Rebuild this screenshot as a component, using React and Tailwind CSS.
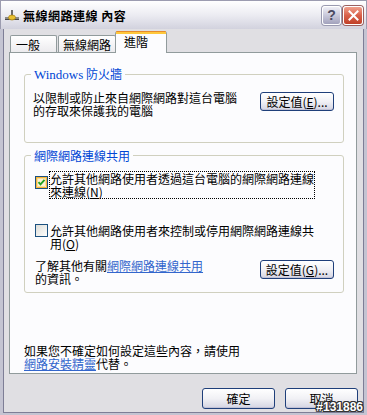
import React from "react";

const FONT = "font-['Noto_Sans_CJK_TC','Noto_Sans',sans-serif]";

function XpButton({ children, className = "" }) {
  return (
    <div
      className={`flex items-center justify-center whitespace-nowrap rounded-[3px] border border-[#1f3f7a] bg-gradient-to-b from-[#ffffff] via-[#f1f1f5] to-[#d4d4e2] shadow-[inset_0_-1px_0_#c2c2d6,inset_0_1px_0_#ffffff] text-[12px] leading-[13px] text-black ${className}`}
    >
      {children}
    </div>
  );
}

function CheckBox({ checked }) {
  return (
    <svg width="13" height="13" viewBox="0 0 13 13" className="shrink-0">
      <defs>
        <linearGradient id={checked ? "cbg1" : "cbg2"} x1="0" y1="0" x2="1" y2="1">
          <stop offset="0" stopColor="#dcdcd7" />
          <stop offset="1" stopColor="#ffffff" />
        </linearGradient>
      </defs>
      <rect x="0.5" y="0.5" width="12" height="12" fill={`url(#${checked ? "cbg1" : "cbg2"})`} stroke="#1c5180" />
      {checked && (
        <>
          <rect x="1.5" y="1.5" width="10" height="10" fill="none" stroke="#f8b636" />
          <rect x="2.5" y="2.5" width="8" height="8" fill="#fdf3d6" stroke="#fcd373" strokeWidth="0.6" />
          <path d="M3.5 6.2 L5.5 8.4 L9.5 3.8" fill="none" stroke="#21a121" strokeWidth="1.8" />
        </>
      )}
    </svg>
  );
}

function AppIcon() {
  return (
    <svg width="14" height="12" viewBox="0 0 14 12">
      <rect x="6" y="0" width="2" height="7" fill="#6b6b6b" />
      <rect x="0" y="7" width="14" height="2" fill="#8a8a8a" />
      <rect x="0" y="9" width="14" height="1" fill="#4a4a4a" />
      <ellipse cx="7" cy="7.5" rx="3.5" ry="2.5" fill="#e8c030" stroke="#a07a10" strokeWidth="0.7" />
    </svg>
  );
}

export default function App() {
  return (
    <div className={`relative w-[367px] h-[415px] overflow-hidden bg-[#c4c4d2] flex flex-col ${FONT}`}>
      {/* Title bar */}
      <div className="h-[29px] shrink-0 flex items-center bg-gradient-to-b from-[#ffffff] via-[#ececf2] to-[#d2d2de] border-t border-x border-[#9c9cb0]">
        <div className="ml-[4px] mt-[1px] flex items-center">
          <AppIcon />
        </div>
        <div className="ml-[4px] text-[12px] font-bold tracking-[0.5px] text-black leading-[13px] whitespace-nowrap">
          無線網路連線 內容
        </div>
        <div className="ml-auto mr-[3px] flex items-center">
          <div className="w-[19px] h-[19px] rounded-[3px] border border-white bg-gradient-to-b from-[#eeeef6] via-[#c8c8da] to-[#a2a2bc] flex items-center justify-center shadow-[0_0_0_1px_#9a9ab0]">
            <span className="text-[14px] font-bold leading-none text-[#4a4a60] font-['Liberation_Sans',sans-serif]">?</span>
          </div>
          <div className="ml-[2px] w-[20px] h-[19px] rounded-[3px] border border-white bg-gradient-to-b from-[#f0a08c] via-[#d8604a] to-[#c04028] flex items-center justify-center shadow-[0_0_0_1px_#9a6060]">
            <svg width="11" height="11" viewBox="0 0 11 11">
              <path d="M1.5 1.5 L9.5 9.5 M9.5 1.5 L1.5 9.5" stroke="#ffffff" strokeWidth="2" strokeLinecap="square" />
            </svg>
          </div>
        </div>
      </div>

      {/* Body */}
      <div className="flex-1 mx-[3px] mb-[2px] border-x border-b border-[#7e7e96] bg-[#e0dfe3] flex flex-col">
        {/* Tabs */}
        <div className="h-[23px] flex items-end pl-[6px] relative z-10">
          <div className="w-[47px] h-[17px] border-t border-x border-[#919b9c] rounded-t-[2px] bg-gradient-to-b from-[#ffffff] to-[#ecebee] text-[12px] leading-[13px] pl-[5px] pt-[2px] text-black whitespace-nowrap">
            一般
          </div>
          <div className="ml-[1px] w-[58px] h-[17px] border-t border-x border-[#919b9c] rounded-t-[2px] bg-gradient-to-b from-[#ffffff] to-[#ecebee] text-[12px] leading-[13px] pl-[4px] pt-[2px] text-black whitespace-nowrap">
            無線網路
          </div>
          <div className="-ml-[1px] -mb-px w-[52px] h-[22px] border-x border-[#919b9c] rounded-t-[3px] bg-[#fcfcfe] flex flex-col">
            <div className="h-[1px] bg-[#e68b2c] rounded-t-[3px]" />
            <div className="h-[2px] bg-[#ffc83c]" />
            <div className="text-[12px] leading-[13px] pl-[8px] pt-[1px] text-black whitespace-nowrap">進階</div>
          </div>
        </div>

        {/* Panel */}
        <div className="ml-[5px] w-[348px] h-[322px] border border-[#919b9c] bg-[#fcfcfe] flex flex-col text-[12px] leading-[13px] text-black">
          {/* Group 1 */}
          <fieldset className="ml-[14px] mt-[14px] w-[320px] border border-[#d0d0bf] rounded-[3px] pt-[10px] pb-[25px]">
            <legend className="ml-[6px] px-[3px] text-[#0046d5] leading-[13px] whitespace-nowrap">
              <span className="font-['Liberation_Serif',serif] text-[13px]">Windows</span> 防火牆
            </legend>
            <div className="flex items-start pl-[8px] pr-[9px]">
              <div className="whitespace-nowrap">
                以限制或防止來自網際網路對這台電腦
                <br />
                的存取來保護我的電腦
              </div>
              <XpButton className="ml-auto mt-[1px] w-[74px] h-[19px]">設定值(<u>E</u>)...</XpButton>
            </div>
          </fieldset>

          {/* Group 2 */}
          <fieldset className="ml-[14px] mt-[6px] w-[320px] border border-[#d0d0bf] rounded-[3px] pt-[9px] pb-[7px]">
            <legend className="ml-[6px] px-[3px] text-[#0046d5] leading-[13px] whitespace-nowrap">網際網路連線共用</legend>
            <div className="flex items-start pl-[10px]">
              <div className="mt-[5px]">
                <CheckBox checked />
              </div>
              <div className="ml-[1px] w-[266px] border border-dotted border-black whitespace-nowrap">
                允許其他網路使用者透過這台電腦的網際網路連線
                <br />
                來連線(<u>N</u>)
              </div>
            </div>
            <div className="flex items-start pl-[10px] mt-[24px]">
              <div className="mt-[1px]">
                <CheckBox checked={false} />
              </div>
              <div className="ml-[1px] w-[266px] border border-transparent whitespace-nowrap">
                允許其他網路使用者來控制或停用網際網路連線共
                <br />
                用(<u>O</u>)
              </div>
            </div>
            <div className="flex items-start pl-[10px] pr-[9px] mt-[8px]">
              <div className="whitespace-nowrap">
                了解其他有關<span className="text-[#3366cc] underline">網際網路連線共用</span>
                <br />
                的資訊。
              </div>
              <XpButton className="ml-auto mt-[1px] w-[74px] h-[19px]">設定值(<u>G</u>)...</XpButton>
            </div>
          </fieldset>

          <div className="mt-auto ml-[14px] mb-[3px] whitespace-nowrap">
            如果您不確定如何設定這些內容，請使用
            <br />
            <span className="text-[#3366cc] underline">網路安裝精靈</span>代替。
          </div>
        </div>

        {/* Bottom buttons */}
        <div className="mt-[14px] flex justify-end pr-[5px] gap-[10px]">
          <XpButton className="w-[73px] h-[21px]">確定</XpButton>
          <XpButton className="w-[73px] h-[21px]">取消</XpButton>
        </div>
      </div>

      {/* watermark */}
      <div className="absolute right-[4px] bottom-[1px] text-[12px] font-bold leading-[13px] text-white font-['Liberation_Sans',sans-serif] [text-shadow:1px_0_0_#333,-1px_0_0_#333,0_1px_0_#333,0_-1px_0_#333,1px_1px_0_#333,-1px_-1px_0_#333,1px_-1px_0_#333,-1px_1px_0_#333]">
        #131886
      </div>
    </div>
  );
}
